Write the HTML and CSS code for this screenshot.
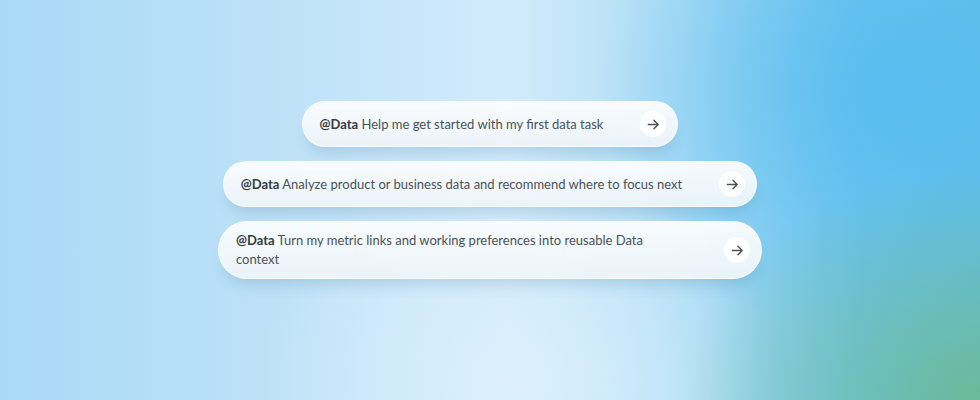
FILE: index.html
```html
<!DOCTYPE html>
<html lang="en">
<head>
    <meta charset="UTF-8">
    <title>Data prompts</title>
    <link rel="stylesheet" href="styles.css">
</head>
<body>
<div class="stage">
    <div class="prompts">
        <div class="pill">
            <p class="text"><b>@Data</b> Help me get started with my first data task</p>
            <span class="go"><svg viewBox="0 0 16 16"><path d="M2.5 8h10.5M8.5 3.5l4.5 4.5-4.5 4.5"/></svg></span>
        </div>
        <div class="pill">
            <p class="text"><b>@Data</b> Analyze product or business data and recommend where to focus next</p>
            <span class="go"><svg viewBox="0 0 16 16"><path d="M2.5 8h10.5M8.5 3.5l4.5 4.5-4.5 4.5"/></svg></span>
        </div>
        <div class="pill">
            <p class="text"><b>@Data</b> Turn my metric links and working preferences into reusable Data context</p>
            <span class="go"><svg viewBox="0 0 16 16"><path d="M2.5 8h10.5M8.5 3.5l4.5 4.5-4.5 4.5"/></svg></span>
        </div>
    </div>
</div>
</body>
</html>
```

FILE: styles.css
```css
*{
    margin: 0;
    padding: 0;
    box-sizing: border-box;
}
html,body{
    width: 980px;
    height: 400px;
    overflow: hidden;
}
body{
    font-family: Lato, "Open Sans", sans-serif;
    background:
        radial-gradient(ellipse 300px 230px at 980px 400px, rgba(108,185,150,0.95), rgba(108,185,150,0) 100%),
        radial-gradient(ellipse 300px 260px at 900px 90px, rgba(86,188,240,0.9), rgba(86,188,240,0) 100%),
        radial-gradient(ellipse 260px 220px at 520px 380px, rgba(220,240,252,0.9), rgba(220,240,252,0) 100%),
        linear-gradient(90deg, #a9d9f6 0%, #bfe2f8 30%, #d1ebfb 52%, #acdcf5 70%, #70c6ee 88%, #66c0e6 100%);
}
.stage{
    height: 400px;
    padding-top: 101px;
}
.prompts{
    display: flex;
    flex-direction: column;
    align-items: center;
    gap: 14px;
}
.pill{
    display: flex;
    align-items: center;
    gap: 37px;
    padding: 9px 11px 9px 17px;
    border-radius: 30px;
    background: linear-gradient(180deg, rgba(250,252,254,0.96), rgba(237,244,249,0.94));
    border: 1px solid rgba(255,255,255,0.7);
    box-shadow: 0 11px 14px -5px rgba(60,110,150,0.2);
}
.text{
    font-size: 13px;
    line-height: 19px;
    color: #4b5259;
    max-width: 451px;
}
.text b{
    font-weight: 700;
    color: #363b41;
}
.go{
    flex: none;
    width: 26px;
    height: 26px;
    border-radius: 50%;
    background: #fff;
    display: flex;
    align-items: center;
    justify-content: center;
}
.go svg{
    width: 15px;
    height: 15px;
    fill: none;
    stroke: #4d5257;
    stroke-width: 1.5;
    stroke-linecap: round;
    stroke-linejoin: round;
}
```
